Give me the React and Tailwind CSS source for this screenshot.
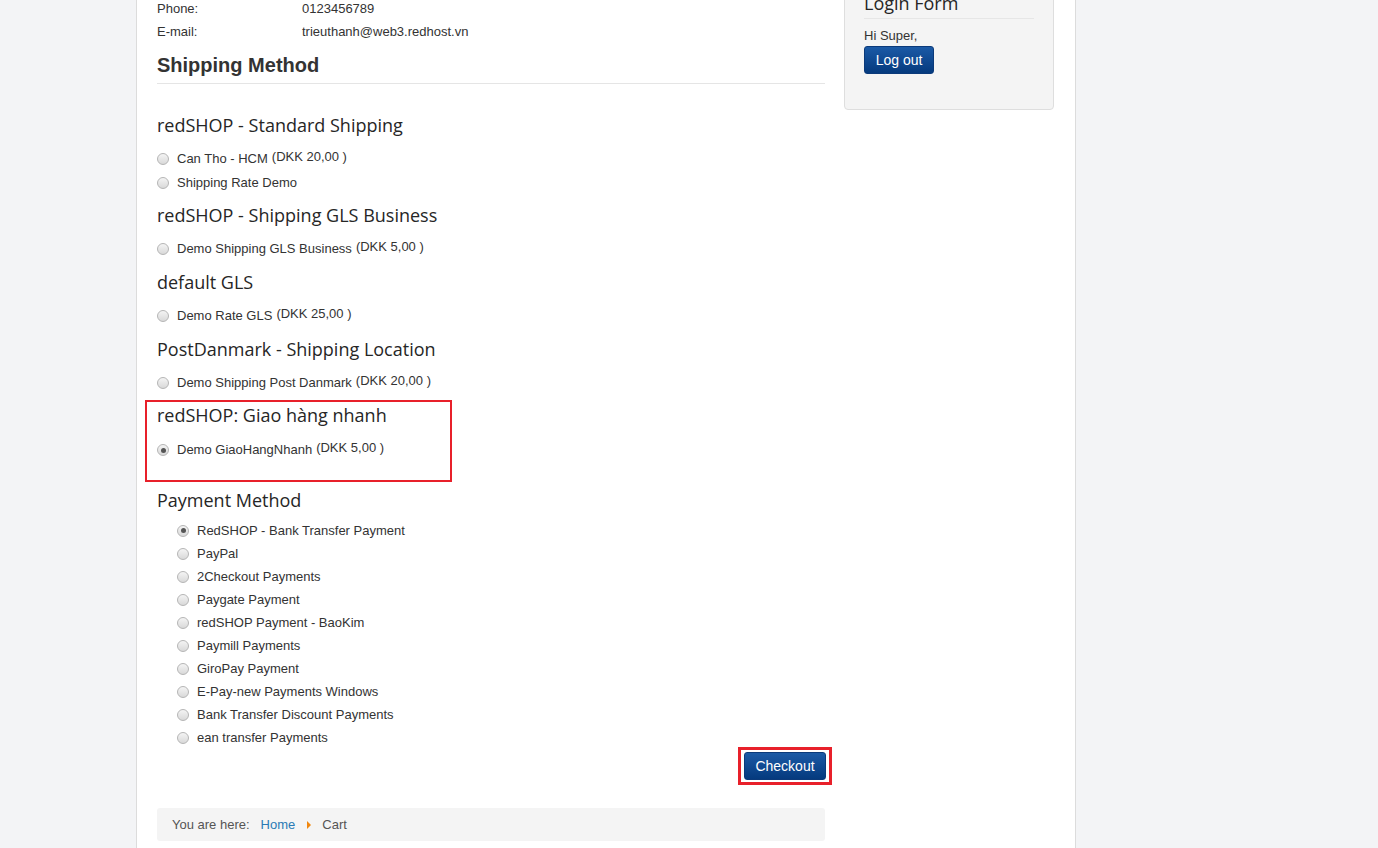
import React from "react";

const shippingGroups = [
  {
    title: "redSHOP - Standard Shipping",
    rates: [
      { name: "Can Tho - HCM", price: "(DKK 20,00 )" },
      { name: "Shipping Rate Demo" },
    ],
  },
  {
    title: "redSHOP - Shipping GLS Business",
    rates: [{ name: "Demo Shipping GLS Business", price: "(DKK 5,00 )" }],
  },
  {
    title: "default GLS",
    rates: [{ name: "Demo Rate GLS", price: "(DKK 25,00 )" }],
  },
  {
    title: "PostDanmark - Shipping Location",
    rates: [{ name: "Demo Shipping Post Danmark", price: "(DKK 20,00 )" }],
  },
];

const payments = [
  "RedSHOP - Bank Transfer Payment",
  "PayPal",
  "2Checkout Payments",
  "Paygate Payment",
  "redSHOP Payment - BaoKim",
  "Paymill Payments",
  "GiroPay Payment",
  "E-Pay-new Payments Windows",
  "Bank Transfer Discount Payments",
  "ean transfer Payments",
];

const Radio = ({ checked }) => (
  <span className="relative inline-block w-[12px] h-[12px] rounded-full border border-[#b5b5b5] bg-gradient-to-b from-[#f4f4f4] to-[#d9d9d9] shrink-0">
    {checked && (
      <span className="absolute left-[2.5px] top-[2.5px] w-[5px] h-[5px] rounded-full bg-[#555]" />
    )}
  </span>
);

const RateRow = ({ name, price, checked }) => (
  <div className={"flex items-center " + (price ? "h-[24px]" : "h-[23px]")}>
    <Radio checked={checked} />
    <span className="ml-[8px] text-[13px] text-[#333]">{name}</span>
    {price && (
      <span className="ml-[4px] text-[13px] text-[#333] relative top-[-2px]">
        {price}
      </span>
    )}
  </div>
);

const GroupTitle = ({ children }) => (
  <h3
    className="text-[18px] leading-[24px] text-[#262626]"
    style={{ fontFamily: '"Open Sans", sans-serif' }}
  >
    {children}
  </h3>
);

const BlueButton = ({ children, className }) => (
  <button
    type="button"
    className={
      "rounded-[3px] border border-[#0b3a7a] bg-gradient-to-b from-[#1b5aa6] to-[#053a7e] text-white text-[14px] " +
      className
    }
  >
    {children}
  </button>
);

export default function App() {
  return (
    <div
      className="min-h-[848px] bg-[#f3f4f6] text-[#333]"
      style={{ fontFamily: '"Liberation Sans", Arial, sans-serif' }}
    >
      <div className="ml-[136px] w-[940px] min-h-[848px] bg-white border-l border-r border-[#dcdcdc] flex pl-[20px] pr-[21px]">
        {/* Main column */}
        <div className="w-[668px]">
          {/* Customer info */}
          <div className="text-[13px] leading-[23px] mt-[-3px]">
            <div className="flex">
              <span className="w-[145px]">Phone:</span>
              <span>0123456789</span>
            </div>
            <div className="flex">
              <span className="w-[145px]">E-mail:</span>
              <span>trieuthanh@web3.redhost.vn</span>
            </div>
          </div>

          <h2 className="mt-[10px] text-[20px] leading-[24px] font-bold text-[#333] pb-[6px] border-b border-[#e5e5e5]">
            Shipping Method
          </h2>

          {shippingGroups.map((g, i) => (
            <div key={g.title} className={i === 0 ? "mt-[29px]" : "mt-[9px]"}>
              <GroupTitle>{g.title}</GroupTitle>
              <div className="mt-[10px]">
                {g.rates.map((r) => (
                  <RateRow key={r.name} name={r.name} price={r.price} />
                ))}
              </div>
            </div>
          ))}

          {/* Highlighted group */}
          <div className="ml-[-12px] mt-[5px] w-[307px] h-[82px] border-2 border-[#e8202a] pl-[10px] pt-[1px]">
            <GroupTitle>redSHOP: Giao hàng nhanh</GroupTitle>
            <div className="mt-[11px]">
              <RateRow name="Demo GiaoHangNhanh" price="(DKK 5,00 )" checked />
            </div>
          </div>

          {/* Payment */}
          <div className="mt-[6px]">
            <GroupTitle>Payment Method</GroupTitle>
            <div className="mt-[7px] pl-[20px]">
              {payments.map((p, i) => (
                <RateRow key={p} name={p} checked={i === 0} />
              ))}
            </div>
          </div>

          <div className="flex justify-end mr-[-7px] mt-[-2px]">
            <div className="border-[3px] border-[#e8202a] px-[3px] py-[2px]">
              <BlueButton className="w-[82px] h-[28px]">Checkout</BlueButton>
            </div>
          </div>

          {/* Breadcrumb */}
          <div className="mt-[23px] h-[33px] bg-[#f4f4f4] rounded-[3px] flex items-center pl-[15px] text-[13px]">
            <span className="text-[#555]">You are here:</span>
            <span className="ml-[11px] text-[#2a7ab5]">Home</span>
            <span className="ml-[12px] mr-[11px] w-0 h-0 border-t-[4px] border-b-[4px] border-l-[4px] border-t-transparent border-b-transparent border-l-[#f0870f]" />
            <span className="text-[#555]">Cart</span>
          </div>
        </div>

        {/* Sidebar */}
        <div className="ml-[19px] w-[210px]">
          <div className="mt-[-20px] h-[130px] bg-[#f4f4f4] border border-[#dedede] rounded-[4px] px-[19px] pt-[10px]">
            <h3
              className="text-[18px] leading-[24px] text-[#262626] pb-[3px] border-b border-[#e6e6e6]"
              style={{ fontFamily: '"Open Sans", sans-serif' }}
            >
              Login Form
            </h3>
            <div className="mt-[9px] text-[13px] leading-[16px]">Hi Super,</div>
            <BlueButton className="mt-[2px] w-[70px] h-[28px]">Log out</BlueButton>
          </div>
        </div>
      </div>
    </div>
  );
}
